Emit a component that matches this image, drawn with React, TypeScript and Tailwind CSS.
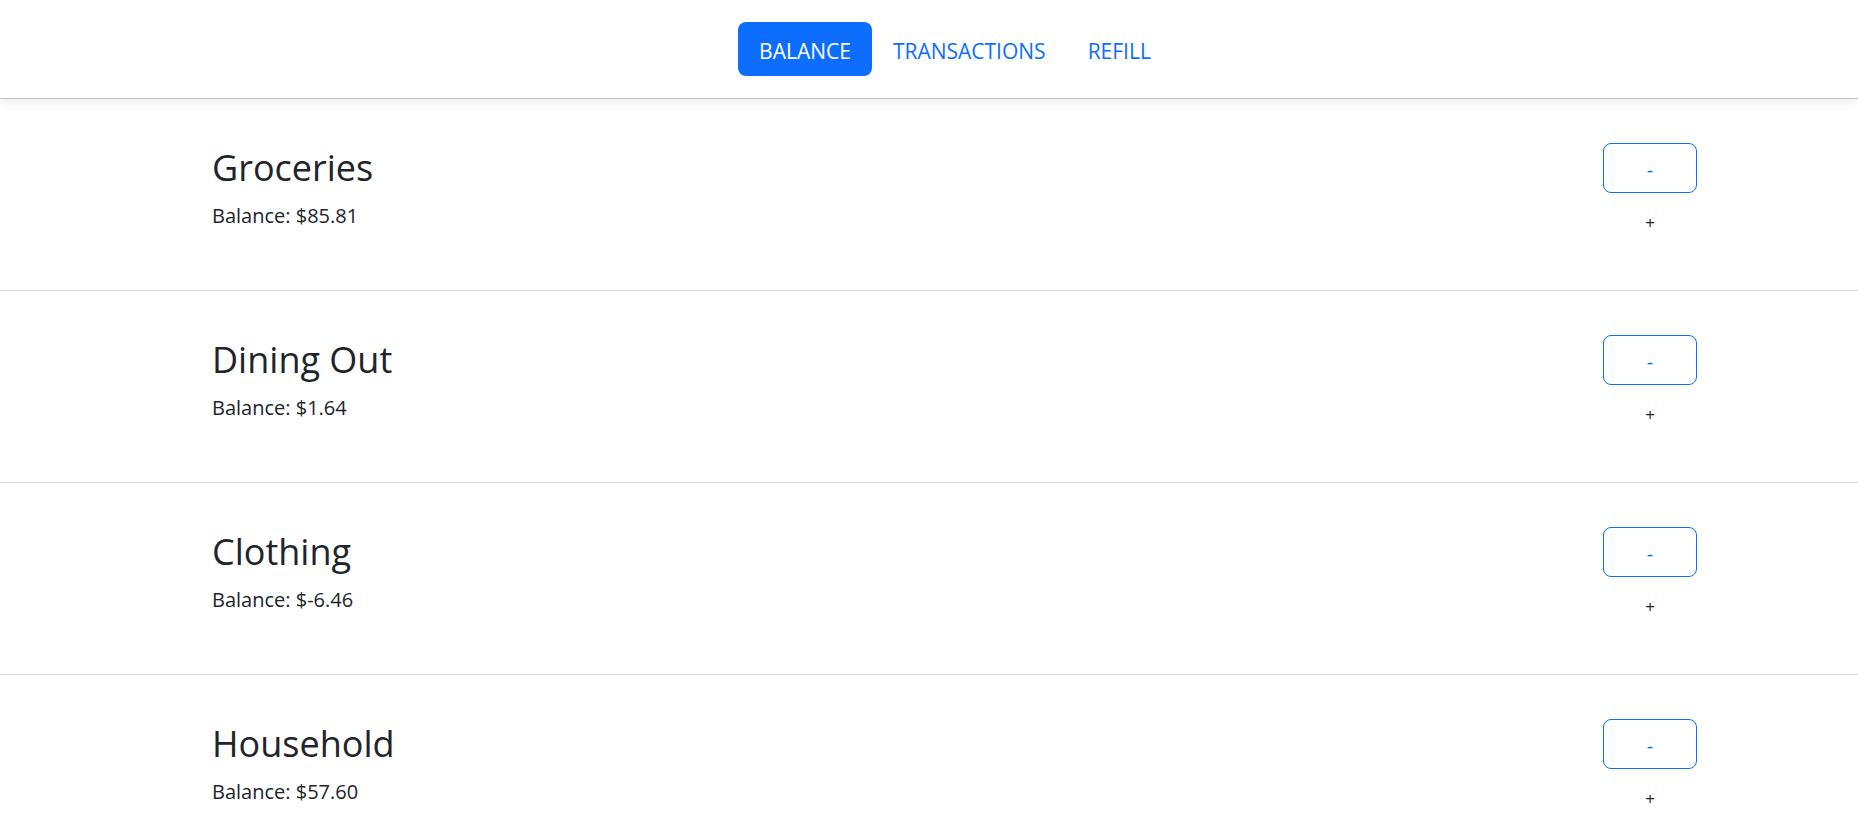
import React from "react";

const rows = [
  { name: "Groceries", balance: "$85.81" },
  { name: "Dining Out", balance: "$1.64" },
  { name: "Clothing", balance: "$-6.46" },
  { name: "Household", balance: "$57.60" },
];

export default function App() {
  return (
    <div className="min-h-screen bg-white text-[#212529]" style={{ fontFamily: '"Open Sans", "Noto Sans", sans-serif' }}>
      <nav className="relative z-10 h-[99px] border-b border-[#c4c4c4] bg-white shadow-[0_3px_10px_rgba(0,0,0,0.08)] flex items-center justify-center pl-[52px]">
        <div className="flex items-center">
          <button className="h-[54px] px-[21px] rounded-[8px] bg-[#0d6efd] text-white text-[21px] leading-none pt-[4px]">BALANCE</button>
          <button className="h-[54px] px-[21px] text-[#0d6efd] text-[21px] leading-none pt-[4px]">TRANSACTIONS</button>
          <button className="h-[54px] px-[21px] text-[#0d6efd] text-[21px] leading-none pt-[4px]">REFILL</button>
        </div>
      </nav>
      <div>
        {rows.map((r) => (
          <div key={r.name} className="h-[192px] border-b border-[#d6d6d6]">
            <div className="ml-[212px] w-[1485px] flex justify-between pt-[44px]">
              <div className="pt-[1px]">
                <div className="text-[36px] leading-[48px]">{r.name}</div>
                <div className="text-[20px] leading-[28px] mt-[10px]">Balance: {r.balance}</div>
              </div>
              <div className="flex flex-col items-center w-[94px]">
                <button className="w-[94px] h-[50px] rounded-[8px] border border-[#0d6efd] text-[#0d6efd] text-[20px] leading-none pt-[3px]">-</button>
                <button className="mt-[21px] text-[17px] leading-none text-[#212529]">+</button>
              </div>
            </div>
          </div>
        ))}
      </div>
    </div>
  );
}
